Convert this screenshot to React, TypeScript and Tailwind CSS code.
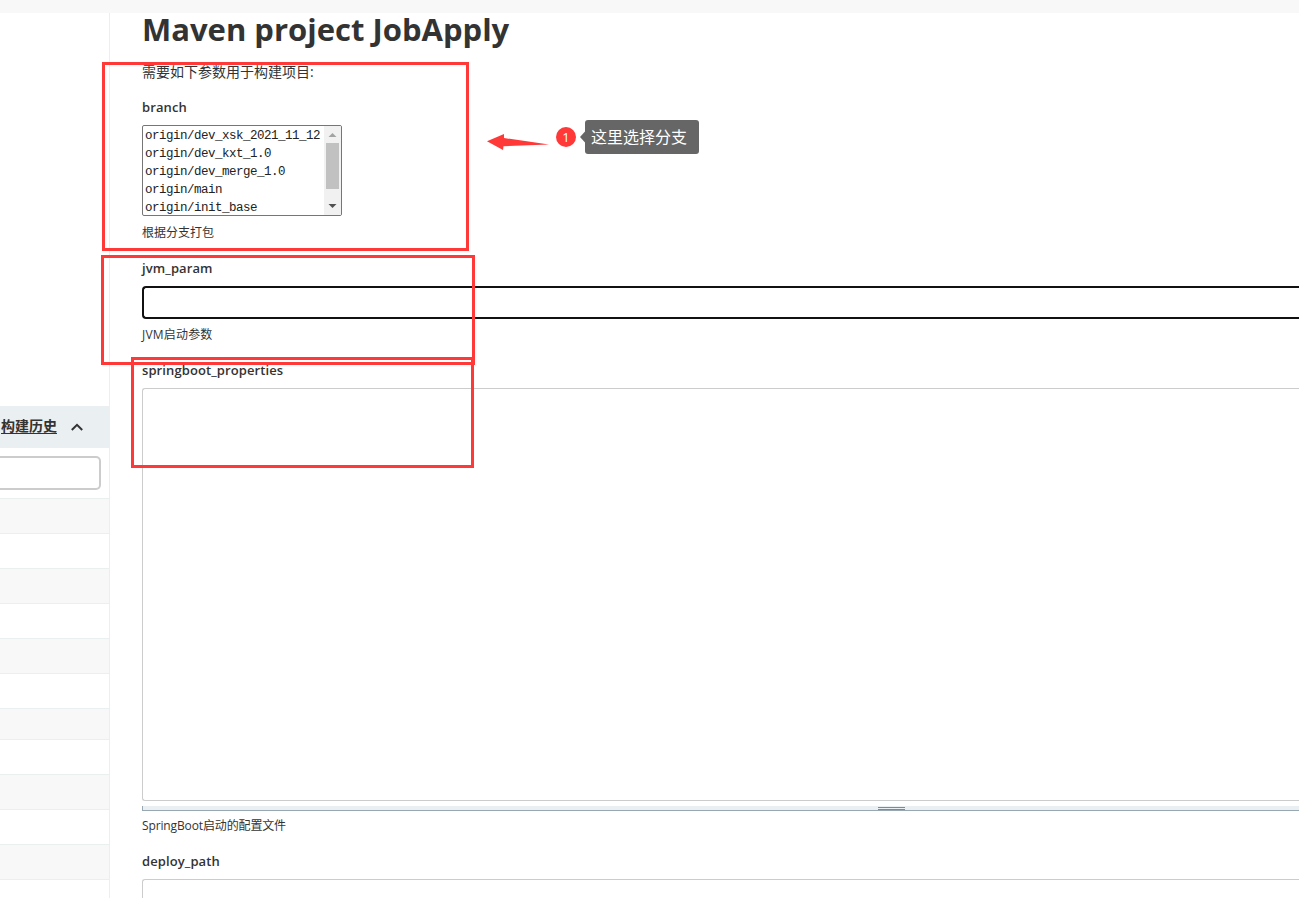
import React from "react";

const branches = [
  "origin/dev_xsk_2021_11_12",
  "origin/dev_kxt_1.0",
  "origin/dev_merge_1.0",
  "origin/main",
  "origin/init_base",
];

const historyRows = [35, 35, 35, 35, 35, 35, 31, 35, 35, 35, 35, 35];

function Sidebar() {
  return (
    <aside className="flex w-[110px] shrink-0 flex-col border-r border-[#eaefef] pt-[393px]">
      <div className="flex h-[42px] shrink-0 items-center bg-[#eaeff2] pl-px">
        <span className="mb-[2px] text-[14px] leading-[20px] font-bold whitespace-nowrap underline underline-offset-[2px]">构建历史</span>
        <svg className="ml-[14px]" width="12" height="8" viewBox="0 0 12 8" fill="none" stroke="#333" strokeWidth="2">
          <path d="M0.8 7L6 1.8L11.2 7" />
        </svg>
      </div>
      <div className="mt-2 mb-2 h-[34px] w-[101px] shrink-0 rounded-r-[5px] border-2 border-l-0 border-[#ccc] bg-white" />
      {historyRows.map((height, i) => (
        <div
          key={i}
          className={`shrink-0 border-t border-[#eaefef] ${i % 2 === 0 ? "bg-[#f8f8f8]" : "bg-white"}`}
          style={{ height }}
        />
      ))}
    </aside>
  );
}

function BranchSelect() {
  return (
    <div className="flex h-[91px] w-[200px] overflow-hidden rounded-[2px] border border-[#767676] bg-white">
      <ul className="w-[181px] pt-px pl-[2px] font-['Liberation_Mono','Noto_Sans_CJK_SC',monospace] text-[12.5px] tracking-[-0.5px] text-[#222]">
        {branches.map((b) => (
          <li key={b} className="h-[18px] leading-[18px] whitespace-nowrap">{b}</li>
        ))}
      </ul>
      <div className="flex w-[17px] flex-col items-center bg-[#f1f1f1]">
        <svg className="shrink-0" width="17" height="17" viewBox="0 0 17 17" fill="#a3a3a3">
          <path d="M4.5 11L8.5 7L12.5 11Z" />
        </svg>
        <div className="h-[46px] w-[13px] shrink-0 bg-[#c1c1c1]" />
        <svg className="mt-auto shrink-0" width="17" height="17" viewBox="0 0 17 17" fill="#505050">
          <path d="M4.5 6L8.5 10L12.5 6Z" />
        </svg>
      </div>
    </div>
  );
}

function Label({ children }: { children: React.ReactNode }) {
  return <div className="h-5 text-[13px] leading-5 font-semibold tracking-[0.1px] whitespace-nowrap">{children}</div>;
}

function Hint({ children }: { children: React.ReactNode }) {
  return <div className="h-4 text-[12px] leading-4 whitespace-nowrap">{children}</div>;
}

function Annotations() {
  return (
    <>
      <div className="absolute top-[62px] left-[102px] h-[189px] w-[367px] border-3 border-[#ff3838]" />
      <div className="absolute top-[255px] left-[101px] h-[110px] w-[374px] border-3 border-[#ff3838]" />
      <div className="absolute top-[357px] left-[131px] h-[111px] w-[343px] border-3 border-[#ff3838]" />
      <svg className="absolute top-[132px] left-[486px]" width="66" height="20" viewBox="486 132 66 20" fill="#ff3838">
        <path d="M487 141.2L504 134V138L549 144.6L503.5 146.2L503 150Z" />
      </svg>
      <div className="absolute top-[127px] left-[556px] flex h-5 w-5 items-center justify-center rounded-full bg-[#ff3838] text-[13px] leading-5 text-white">
        1
      </div>
      <div className="absolute top-[120px] left-[580px] flex items-center">
        <svg width="5" height="12" viewBox="0 0 5 12" fill="#666">
          <path d="M5 0.5V11.5L0 6Z" />
        </svg>
        <div className="h-[34px] w-[114px] rounded-[3px] bg-[#666] pl-[6px] text-[16px] leading-[34px] whitespace-nowrap text-white">
          这里选择分支
        </div>
      </div>
    </>
  );
}

export default function App() {
  return (
    <div className="relative flex h-[898px] w-[1299px] flex-col overflow-hidden bg-white font-['Open_Sans','Noto_Sans_CJK_SC',sans-serif] text-[#333]">
      <header className="h-[13px] shrink-0 bg-[#f8f8f8]" />
      <div className="flex min-h-0 flex-1">
        <Sidebar />
        <main className="flex min-w-0 flex-1 flex-col pl-8">
          <h1 className="h-[36px] shrink-0 text-[31px] leading-[33px] font-bold whitespace-nowrap">Maven project JobApply</h1>
          <p className="mt-[13px] h-5 shrink-0 text-[14px] leading-5 whitespace-nowrap">需要如下参数用于构建项目:</p>

          <div className="mt-[15px] flex shrink-0 flex-col">
            <Label>branch</Label>
            <div className="mt-2">
              <BranchSelect />
            </div>
            <div className="mt-[9px]">
              <Hint>根据分支打包</Hint>
            </div>
          </div>

          <div className="mt-[17px] flex shrink-0 flex-col">
            <Label>jvm_param</Label>
            <div className="mt-2 h-[33px] rounded-l-[4px] border-2 border-r-0 border-[#111] bg-white" />
            <div className="mt-2 tracking-[0.2px]">
              <Hint>JVM启动参数</Hint>
            </div>
          </div>

          <div className="mt-[17px] flex shrink-0 flex-col">
            <Label>springboot_properties</Label>
            <div className="mt-2 h-[413px] rounded-l-[3px] border border-r-0 border-[#ccc] bg-white" />
            <div className="mt-[5px] flex h-[5px] border-b border-l border-[#98a8b2] bg-[#eaeff2]">
              <div className="mt-px ml-[735px] h-[3px] w-[27px] border-y border-[#888]" />
            </div>
            <div className="mt-[7px] tracking-[-0.13px]">
              <Hint>SpringBoot启动的配置文件</Hint>
            </div>
          </div>

          <div className="mt-[17px] flex shrink-0 flex-col">
            <Label>deploy_path</Label>
            <div className="mt-2 h-[33px] rounded-l-[3px] border border-r-0 border-[#ccc] bg-white" />
          </div>
        </main>
      </div>
      <Annotations />
    </div>
  );
}
